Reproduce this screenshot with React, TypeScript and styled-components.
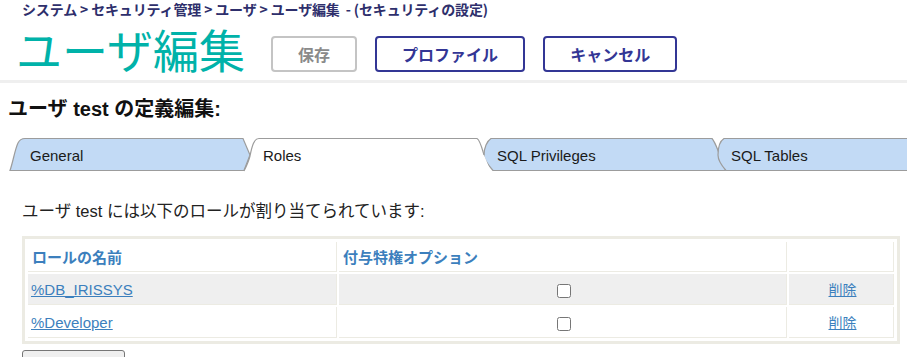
import React from "react";
import styled, { createGlobalStyle } from "styled-components";

const GlobalStyle = createGlobalStyle`
  html, body {
    margin: 0;
    padding: 0;
    background: #ffffff;
    overflow: hidden;
  }
  body {
    font-family: "Liberation Sans", "Noto Sans CJK JP", sans-serif;
    color: #222;
  }
`;

const Page = styled.div`
  width: 907px;
  display: flex;
  flex-direction: column;
`;

const Header = styled.header`
  display: flex;
  flex-direction: column;
  border-bottom: 3px solid #efefef;
`;

const Breadcrumb = styled.div`
  height: 18px;
  line-height: 18px;
  padding-left: 22px;
  font-size: 14px;
  font-weight: bold;
  color: #2e2f6c;
  white-space: pre;
  letter-spacing: -0.15px;
  font-family: "Noto Sans CJK JP", "Liberation Sans", sans-serif;
`;

const TitleRow = styled.div`
  height: 62px;
  display: flex;
  align-items: flex-start;
  padding-left: 16px;
`;

const Title = styled.h1`
  margin: 5px 0 0 0;
  font-size: 46px;
  line-height: 50px;
  font-weight: 400;
  color: #00b2a9;
  font-family: "Noto Sans CJK JP", sans-serif;
`;

const Buttons = styled.div`
  display: flex;
  gap: 18px;
  margin: 18px 0 0 26px;
`;

const HeaderButton = styled.button<{ $disabled?: boolean }>`
  box-sizing: border-box;
  height: 36px;
  padding: 0 25px;
  border: 2px solid ${(p) => (p.$disabled ? "#c4c4c4" : "#333695")};
  border-radius: 4px;
  background: #fff;
  color: ${(p) => (p.$disabled ? "#8a8a8a" : "#333695")};
  font-family: "Noto Sans CJK JP", sans-serif;
  font-size: 16px;
  font-weight: bold;
  line-height: 1;
  cursor: ${(p) => (p.$disabled ? "default" : "pointer")};
`;

const Content = styled.main`
  display: flex;
  flex-direction: column;
`;

const Heading = styled.h2`
  margin: 14px 0 0 8px;
  font-size: 20px;
  line-height: 24px;
  font-weight: bold;
  color: #111;
`;

const TabBar = styled.div`
  display: flex;
  margin: 16px 0 0 8px;
  height: 35px;
`;

const TabItem = styled.div<{ $w?: number; $ml: number; $pl: number; $active?: boolean; $grow?: boolean }>`
  position: relative;
  box-sizing: border-box;
  height: 35px;
  ${(p) => (p.$grow ? "flex: 1;" : `flex: none; width: ${p.$w}px;`)}
  margin-left: ${(p) => p.$ml}px;
  padding-left: ${(p) => p.$pl}px;
  display: flex;
  align-items: center;
  z-index: ${(p) => (p.$active ? 2 : 1)};
  font-size: 15px;
  color: #1a1a1a;
  cursor: pointer;
`;

const TabShape = styled.svg`
  position: absolute;
  left: 0;
  top: 0;
  width: 100%;
  height: 100%;
  overflow: hidden;
`;

const TabLabel = styled.span`
  position: relative;
  padding-top: 1px;
`;

const Intro = styled.p`
  margin: 29px 0 0 22px;
  font-size: 16.5px;
  line-height: 20px;
  color: #222;
`;

const Table = styled.table`
  margin: 15px 0 0 22px;
  width: 878px;
  box-sizing: border-box;
  border: 3px solid #ecebe3;
  border-spacing: 2px;
  padding: 1px;
  table-layout: fixed;
`;

const HeadCell = styled.th<{ $w?: number }>`
  ${(p) => (p.$w ? `width: ${p.$w}px;` : "")}
  box-sizing: border-box;
  height: 30px;
  padding: 0 0 0 4px;
  text-align: left;
  font-size: 15px;
  font-weight: bold;
  color: #3c7fbd;
  border-right: 1px solid #ecebe3;
  border-bottom: 1px solid #ecebe3;
  font-family: "Noto Sans CJK JP", sans-serif;
`;

const Row = styled.tr<{ $shaded?: boolean }>`
  background: ${(p) => (p.$shaded ? "#efefef" : "#ffffff")};
`;

const Cell = styled.td<{ $center?: boolean }>`
  box-sizing: border-box;
  height: 31px;
  padding: 0 0 0 3px;
  text-align: ${(p) => (p.$center ? "center" : "left")};
  border-right: 1px solid #ecebe3;
  border-bottom: 1px solid #ecebe3;
  font-size: 15px;
  vertical-align: middle;
`;

const RoleLink = styled.a`
  color: #3c7fbd;
  text-decoration: underline;
  font-size: 15px;
`;

const DeleteLink = styled.a`
  color: #3c7fbd;
  text-decoration: underline;
  font-size: 14px;
  font-family: "Noto Sans CJK JP", sans-serif;
`;

const Check = styled.input`
  margin: 0;
  width: 14px;
  height: 14px;
  vertical-align: middle;
`;

const AddButton = styled.button`
  margin: 6px 0 0 22px;
  align-self: flex-start;
  box-sizing: border-box;
  width: 103px;
  height: 30px;
  border: 1px solid #767676;
  border-radius: 3px;
  background: #efefef;
`;

type Tab = {
  label: string;
  w?: number;
  ml: number;
  pl: number;
  active?: boolean;
  grow?: boolean;
  fill: string;
  stroke: string;
};

const tabs: Tab[] = [
  {
    label: "General",
    w: 246,
    ml: 0,
    pl: 22,
    fill: "M2,33.5 C5,25 7,12 10,6 C12,2 14,1.5 17,1.5 L235,1.5 L242,18 L236,33.5 Z",
    stroke: "M2,33.5 C5,25 7,12 10,6 C12,2 14,1.5 17,1.5 L235,1.5 L242,18 L236,33.5 Z",
  },
  {
    label: "Roles",
    w: 254,
    ml: -14,
    pl: 23,
    active: true,
    fill: "M4,35 C7,28 9,23 10,19 C12,9 14,1.5 19,1.5 L237,1.5 C240,3 242,11 244,18 L251,35 Z",
    stroke: "M4,34 C7,28 9,23 10,19 C12,9 14,1.5 19,1.5 L237,1.5 C240,3 242,11 244,18",
  },
  {
    label: "SQL Privileges",
    w: 250,
    ml: -14,
    pl: 17,
    fill: "M13,33.5 C9,29 4,23 4,18 C4,11 7,4 11,1.5 L232,1.5 C235,5 237,11 239,16 C241,23 243,29 246,33.5 Z",
    stroke: "M13,33.5 C9,29 4,23 4,18 C4,11 7,4 11,1.5 L232,1.5 C235,5 237,11 239,16 C241,23 243,29 246,33.5 Z",
  },
  {
    label: "SQL Tables",
    ml: -16,
    pl: 17,
    grow: true,
    fill: "M12,33.5 C8,29 4,23 4,18 C4,11 6,4 10,1.5 L400,1.5 L400,33.5 Z",
    stroke: "M12,33.5 C8,29 4,23 4,18 C4,11 6,4 10,1.5 L400,1.5 L400,33.5 Z",
  },
];

const roles = [
  { name: "%DB_IRISSYS", shaded: true },
  { name: "%Developer", shaded: false },
];

export default function App() {
  return (
    <>
      <GlobalStyle />
      <Page>
        <Header>
          <Breadcrumb>{"システム > セキュリティ管理 > ユーザ > ユーザ編集  - (セキュリティの設定)"}</Breadcrumb>
          <TitleRow>
            <Title>ユーザ編集</Title>
            <Buttons>
              <HeaderButton $disabled>保存</HeaderButton>
              <HeaderButton>プロファイル</HeaderButton>
              <HeaderButton>キャンセル</HeaderButton>
            </Buttons>
          </TitleRow>
        </Header>
        <Content>
          <Heading>ユーザ test の定義編集:</Heading>
          <TabBar>
            {tabs.map((t) => (
              <TabItem key={t.label} $w={t.w} $ml={t.ml} $pl={t.pl} $active={t.active} $grow={t.grow}>
                <TabShape preserveAspectRatio="xMinYMin slice">
                  <path d={t.fill} fill={t.active ? "#ffffff" : "#c2daf5"} stroke="none" />
                  <path d={t.stroke} fill="none" stroke="#9c9c9c" strokeWidth={1.2} />
                </TabShape>
                <TabLabel>{t.label}</TabLabel>
              </TabItem>
            ))}
          </TabBar>
          <Intro>ユーザ test には以下のロールが割り当てられています:</Intro>
          <Table>
            <thead>
              <tr>
                <HeadCell $w={309}>ロールの名前</HeadCell>
                <HeadCell $w={448}>付与特権オプション</HeadCell>
                <HeadCell>&nbsp;</HeadCell>
              </tr>
            </thead>
            <tbody>
              {roles.map((r) => (
                <Row key={r.name} $shaded={r.shaded}>
                  <Cell>
                    <RoleLink href="#">{r.name}</RoleLink>
                  </Cell>
                  <Cell $center>
                    <Check type="checkbox" />
                  </Cell>
                  <Cell $center>
                    <DeleteLink href="#">削除</DeleteLink>
                  </Cell>
                </Row>
              ))}
            </tbody>
          </Table>
          <AddButton aria-label="追加" />
        </Content>
      </Page>
    </>
  );
}
